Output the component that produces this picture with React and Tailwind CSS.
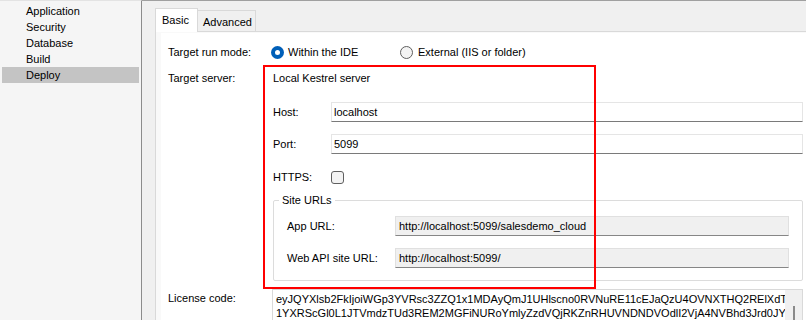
import React from "react";

const sideItems = ["Application", "Security", "Database", "Build", "Deploy"];

const licenseLines = [
  "eyJQYXlsb2FkIjoiWGp3YVRsc3ZZQ1x1MDAyQmJ1UHlscno0RVNuRE11cEJaQzU4OVNXTHQ2RElXdTY",
  "1YXRScGl0L1JTVmdzTUd3REM2MGFiNURoYmlyZzdVQjRKZnRHUVNDNDVOdlI2VjA4NVBhd3Jrd0JYbmt",
];

function RadioOn() {
  return (
    <span className="flex h-[13px] w-[13px] items-center justify-center rounded-full bg-[#005fb8]">
      <span className="h-[5px] w-[5px] rounded-full bg-white" />
    </span>
  );
}

function RadioOff() {
  return (
    <span className="h-[13px] w-[13px] rounded-full border border-[#5f5f5f] bg-[#f3f3f3]" />
  );
}

function TextBox({ children }) {
  return (
    <div className="flex h-[20px] min-w-0 flex-1 items-center border border-[#e5e5e5] border-b-[#7a7a7a] bg-white pl-[2px]">
      {children}
    </div>
  );
}

function ReadOnlyBox({ children }) {
  return (
    <div className="flex h-[20px] w-[394px] shrink-0 items-center border border-[#e0e0e0] border-b-[#868686] bg-[#f0f0f0] pl-[3px]">
      {children}
    </div>
  );
}

function App() {
  return (
    <div className="relative flex h-[320px] w-[806px] overflow-hidden bg-[#f0f0f0] font-['Liberation_Sans',Arial,sans-serif] text-[11px] text-black">
      {/* left nav */}
      <aside className="w-[142px] shrink-0 border-r border-t border-r-[#8c8c8c] border-t-[#e3e3e3] bg-[#f5f5f5] px-[2px] pt-[2px]">
        {sideItems.map((item) => (
          <div
            key={item}
            className={
              item === "Deploy"
                ? "h-[16px] bg-[#c4c4c4] pl-[24px] leading-[16px]"
                : "h-[16px] pl-[24px] leading-[16px]"
            }
          >
            {item}
          </div>
        ))}
      </aside>

      {/* main */}
      <main className="flex min-w-0 flex-1 flex-col border-t border-[#a0a0a0] pl-[13px] pt-[7px]">
        <div className="flex h-[23px] items-end">
          <div className="relative z-10 -mb-px h-[24px] w-[43px] border border-b-0 border-[#d9d9d9] bg-white pl-[6px] pt-[4px] leading-[14px]">
            Basic
          </div>
          <div className="h-[21px] w-[58px] border-r border-t border-[#d9d9d9] bg-[#f0f0f0] pl-[5px] pt-[4px] leading-[14px]">
            Advanced
          </div>
        </div>

        <div className="flex flex-1 flex-col border-l border-t border-[#d9d9d9] bg-[#f9f9f9]">
          <div className="ml-[5px] mt-px flex-1 bg-white pl-[7px] pr-[3px] pt-[10px]">
            {/* run mode */}
            <div className="flex h-[18px] items-center">
              <div className="w-[95px]">Target run mode:</div>
              <div className="flex w-[137px] items-center gap-[4px] pl-[8px]">
                <RadioOn />
                <span>Within the IDE</span>
              </div>
              <div className="flex items-center gap-[5px]">
                <RadioOff />
                <span>External (IIS or folder)</span>
              </div>
            </div>

            {/* server */}
            <div className="mt-[9px] flex">
              <div className="w-[95px] leading-[16px]">Target server:</div>
              <div className="flex min-w-0 flex-1 flex-col pl-[10px]">
                <div className="h-[16px] leading-[16px]">Local Kestrel server</div>

                <div className="mt-[16px] flex items-center">
                  <div className="w-[58px]">Host:</div>
                  <TextBox>localhost</TextBox>
                </div>

                <div className="mt-[12px] flex items-center">
                  <div className="w-[58px]">Port:</div>
                  <TextBox>5099</TextBox>
                </div>

                <div className="mt-[13px] flex h-[20px] items-center">
                  <div className="w-[58px]">HTTPS:</div>
                  <span className="h-[13px] w-[13px] rounded-[3px] border border-[#5f5f5f] bg-[#f3f3f3]" />
                </div>

                <fieldset className="mt-[6px] w-[530px] min-w-0 rounded-[2px] border border-[#dcdcdc]">
                  <legend className="ml-[5px] px-[3px] leading-[14px]">Site URLs</legend>
                  <div className="pb-[12px] pl-[13px]">
                    <div className="mt-[9px] flex items-center">
                      <div className="w-[108px] shrink-0">App URL:</div>
                      <ReadOnlyBox>http://localhost:5099/salesdemo_cloud</ReadOnlyBox>
                    </div>
                    <div className="mt-[12px] flex items-center">
                      <div className="w-[108px] shrink-0">Web API site URL:</div>
                      <ReadOnlyBox>http://localhost:5099/</ReadOnlyBox>
                    </div>
                  </div>
                </fieldset>
              </div>
            </div>

            {/* license */}
            <div className="mt-[8px] flex">
              <div className="w-[95px] pt-[2px] leading-[14px]">License code:</div>
              <div className="ml-[9px] flex h-[60px] min-w-0 flex-1 border border-[#d9d9d9] bg-white">
                <div className="min-w-0 flex-1 overflow-hidden whitespace-nowrap pl-[3px] pt-[2px] leading-[14px]">
                  {licenseLines.map((line) => (
                    <div key={line}>{line}</div>
                  ))}
                </div>
                <div className="w-[17px] shrink-0 bg-[#f0f0f0] pl-[8px] pt-[16px]">
                  <div className="h-[30px] w-[2px] bg-[#8a8a8a]" />
                </div>
              </div>
            </div>
          </div>
        </div>
      </main>

      {/* red annotation frame */}
      <div className="pointer-events-none absolute left-[263px] top-[65px] h-[224px] w-[333px] border-2 border-[#ff0000]" />
    </div>
  );
}

export default App;
